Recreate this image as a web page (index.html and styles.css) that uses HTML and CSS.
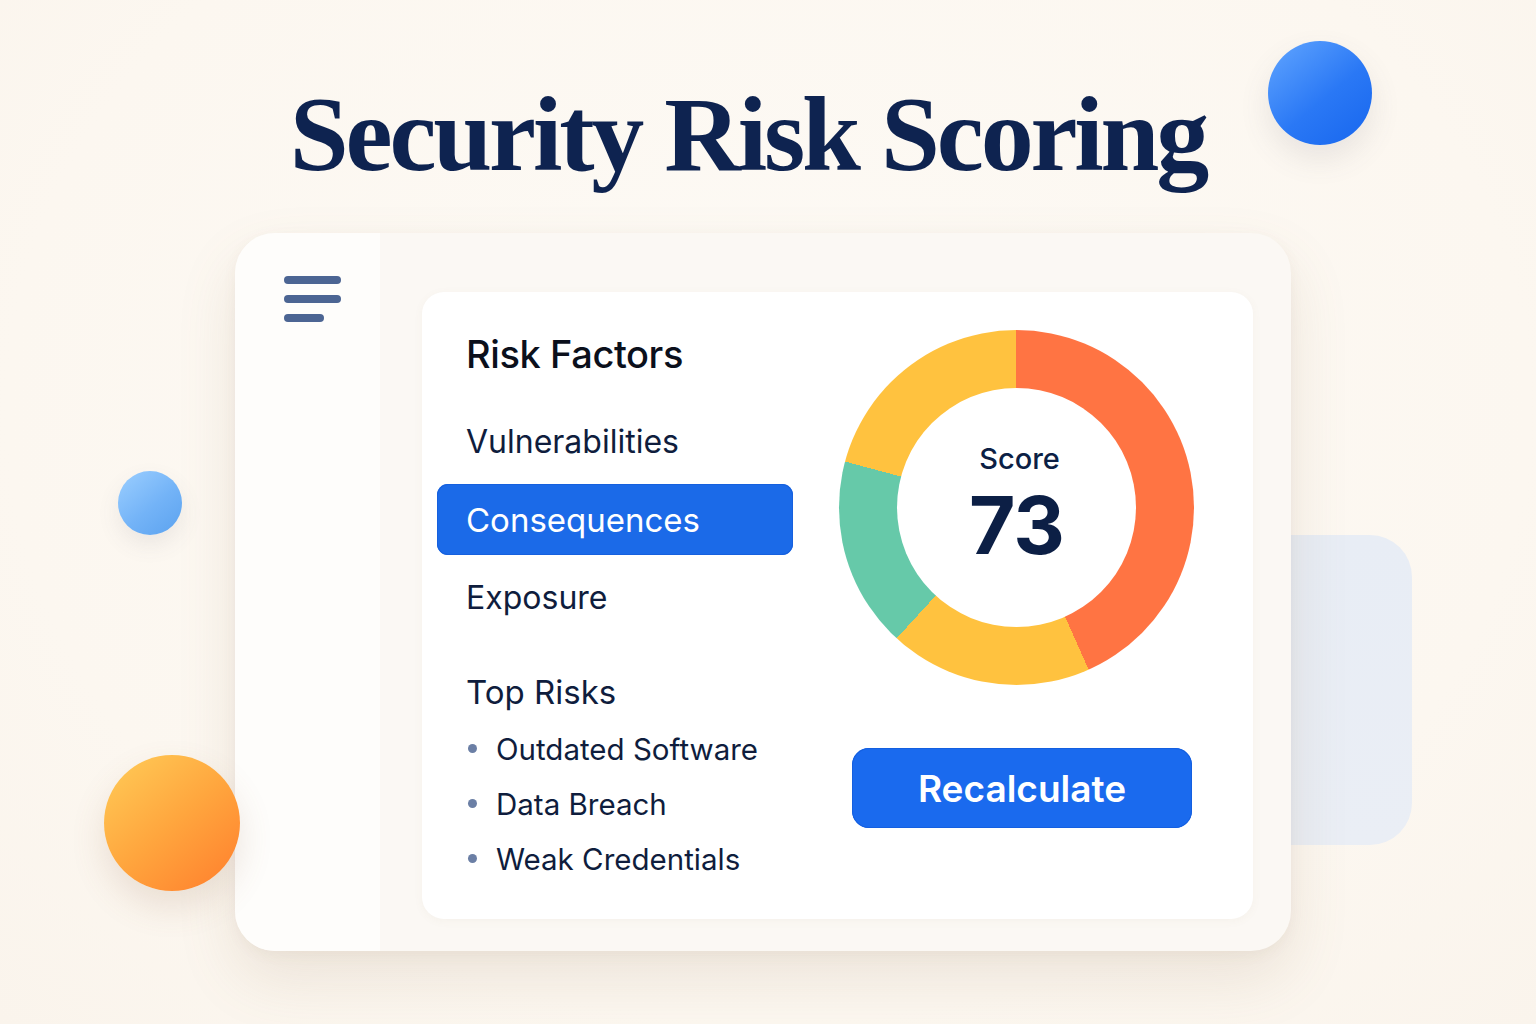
FILE: index.html
```html
<!DOCTYPE html>
<html lang="en">
<head>
<meta charset="utf-8">
<title>Security Risk Scoring</title>
<link rel="stylesheet" href="styles.css">
</head>
<body>
<div class="page">
  <h1 class="title">Security Risk Scoring</h1>

  <div class="stage">
    <div class="back-card"></div>
    <div class="card">
      <aside class="sidebar">
        <div class="hamburger">
          <span class="bar"></span>
          <span class="bar"></span>
          <span class="bar short"></span>
        </div>
      </aside>
      <main class="main">
        <section class="panel">
          <div class="left">
            <h2 class="heading">Risk Factors</h2>
            <ul class="nav">
              <li class="nav-item">Vulnerabilities</li>
              <li class="nav-item active">Consequences</li>
              <li class="nav-item">Exposure</li>
            </ul>
            <h3 class="subheading">Top Risks</h3>
            <ul class="risks">
              <li class="risk"><span class="dot"></span>Outdated Software</li>
              <li class="risk"><span class="dot"></span>Data Breach</li>
              <li class="risk"><span class="dot"></span>Weak Credentials</li>
            </ul>
          </div>
          <div class="right">
            <div class="donut">
              <div class="donut-hole">
                <span class="score-label">Score</span>
                <span class="score-value">73</span>
              </div>
            </div>
            <button class="btn">Recalculate</button>
          </div>
        </section>
      </main>
    </div>
  </div>

  <span class="orb orb-blue-lg"></span>
  <span class="orb orb-blue-sm"></span>
  <span class="orb orb-orange"></span>
</div>
</body>
</html>
```

FILE: styles.css
```css
* { box-sizing: border-box; }

html, body {
  margin: 0;
  padding: 0;
}

body {
  background: #fcf8f2;
  font-family: "Inter", "Noto Sans", sans-serif;
}

.page {
  position: relative;
  width: 1536px;
  height: 1024px;
  overflow: hidden;
  background: radial-gradient(ellipse at 50% 40%, #fdfaf5 0%, #fcf7f0 70%, #faf4ec 100%);
}

.title {
  margin: 0;
  padding: 82px 40px 0 0;
  height: 233px;
  text-align: center;
  font-family: "Liberation Serif", "Times New Roman", serif;
  font-weight: 700;
  font-size: 106px;
  line-height: 106px;
  color: #0e2350;
  letter-spacing: -3.2px;
}

.stage {
  position: relative;
  margin-left: 235px;
  width: 1056px;
  height: 718px;
}

.back-card {
  position: absolute;
  left: 1000px;
  top: 302px;
  width: 177px;
  height: 310px;
  border-radius: 0 42px 42px 0;
  background: linear-gradient(180deg, #e8edf5 0%, #eaeef5 100%);
  z-index: 0;
}

.card {
  position: relative;
  z-index: 1;
  display: grid;
  grid-template-columns: 145px 1fr;
  width: 1056px;
  height: 718px;
  border-radius: 40px;
  background: #fbf8f4;
  box-shadow: 0 28px 60px rgba(140, 110, 80, 0.14), 0 4px 14px rgba(140, 110, 80, 0.06);
  overflow: hidden;
}

.sidebar {
  background: #fefdfb;
  padding: 43px 0 0 49px;
}

.hamburger {
  display: flex;
  flex-direction: column;
  gap: 11px;
}

.bar {
  display: block;
  width: 57px;
  height: 8px;
  border-radius: 4px;
  background: #4c6593;
}

.bar.short {
  width: 40px;
}

.main {
  padding: 59px 38px 32px 42px;
}

.panel {
  display: grid;
  grid-template-columns: 398px 1fr;
  height: 100%;
  background: #ffffff;
  border-radius: 22px;
  box-shadow: 0 2px 10px rgba(140, 110, 80, 0.05);
}

.left {
  padding: 39px 0 0 15px;
}

.heading {
  margin: 0 0 29px 0;
  padding-left: 29px;
  font-size: 38px;
  line-height: 46px;
  font-weight: 500;
  color: #0b101c;
  letter-spacing: -0.4px;
}

.nav {
  list-style: none;
  margin: 0;
  padding: 0;
  display: flex;
  flex-direction: column;
  gap: 7px;
  width: 356px;
}

.nav-item {
  display: flex;
  align-items: center;
  height: 71px;
  padding-left: 29px;
  border-radius: 11px;
  font-size: 32px;
  color: #0f1d3d;
}

.nav-item.active {
  background: #1b6ae8;
  color: #ffffff;
  font-size: 33px;
  box-shadow: inset 0 0 0 1px #1660de;
}

.subheading {
  margin: 39px 0 9px 0;
  padding-left: 29px;
  height: 40px;
  display: flex;
  align-items: center;
  font-size: 33px;
  font-weight: 400;
  color: #0f1d3d;
}

.risks {
  list-style: none;
  margin: 0;
  padding: 0 0 0 29px;
}

.risk {
  display: flex;
  align-items: center;
  height: 55px;
  font-size: 29.5px;
  color: #0f1d3d;
}

.dot {
  width: 9px;
  height: 9px;
  margin: 0 19px 0 2px;
  border-radius: 50%;
  background: #6b7fa5;
  flex: none;
}

.right {
  padding: 38px 0 0 19px;
  display: flex;
  flex-direction: column;
  align-items: flex-start;
}

.donut {
  width: 355px;
  height: 355px;
  border-radius: 50%;
  background: conic-gradient(
    #ff7443 0deg 156deg,
    #ffc23f 156deg 222.5deg,
    #66c9a9 222.5deg 285deg,
    #ffc23f 285deg 360deg
  );
  display: flex;
  align-items: center;
  justify-content: center;
}

.donut-hole {
  width: 239px;
  height: 239px;
  border-radius: 50%;
  background: #ffffff;
  display: flex;
  flex-direction: column;
  align-items: center;
  justify-content: center;
  color: #0c1f45;
  padding-bottom: 8px;
}

.score-label {
  font-size: 29px;
  line-height: 34px;
  font-weight: 500;
  margin-left: 6px;
  margin-bottom: 9px;
}

.score-value {
  font-size: 80px;
  line-height: 80px;
  font-weight: 700;
  letter-spacing: -1px;
}

.btn {
  margin: 63px 0 0 13px;
  width: 340px;
  height: 80px;
  border: none;
  border-radius: 17px;
  background: #1a6aee;
  box-shadow: inset 0 0 0 1px #145fe0;
  color: #ffffff;
  font-family: "Inter", "Noto Sans", sans-serif;
  font-size: 37px;
  font-weight: 600;
}

.orb {
  position: absolute;
  border-radius: 50%;
  z-index: 3;
}

.orb-blue-lg {
  left: 1268px;
  top: 41px;
  width: 104px;
  height: 104px;
  background: linear-gradient(140deg, #62a6ff 0%, #2a78f5 55%, #1766ee 100%);
  box-shadow: 0 14px 30px rgba(90, 90, 110, 0.12);
}

.orb-blue-sm {
  left: 118px;
  top: 471px;
  width: 64px;
  height: 64px;
  background: linear-gradient(140deg, #9ccfff 0%, #73b3f7 55%, #5ba2ef 100%);
  box-shadow: 0 10px 22px rgba(90, 90, 110, 0.1);
}

.orb-orange {
  left: 104px;
  top: 755px;
  width: 136px;
  height: 136px;
  background: linear-gradient(140deg, #ffcd58 0%, #ffa63e 50%, #ff7d2c 100%);
  box-shadow: 0 16px 34px rgba(140, 100, 70, 0.16);
}
```
